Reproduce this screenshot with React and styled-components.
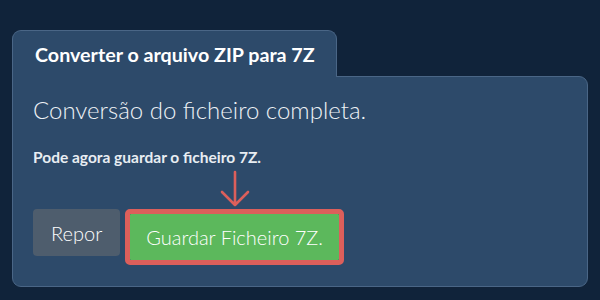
import React from "react";
import styled, { createGlobalStyle } from "styled-components";

const Global = createGlobalStyle`
  html, body { margin: 0; padding: 0; background: #10233a; }
  body { font-family: Lato, "Open Sans", sans-serif; color: #fff; }
  * { box-sizing: border-box; }
`;

const Page = styled.div`
  width: 600px;
  height: 300px;
  padding: 30px 12px 0 12px;
  display: flex;
  flex-direction: column;
  align-items: flex-start;
`;

const Tab = styled.div`
  position: relative;
  z-index: 1;
  height: 47px;
  margin-bottom: -1px;
  padding: 0 21px 0 22px;
  display: flex;
  align-items: center;
  background: #2d4a6a;
  border: 1px solid #4a6686;
  border-bottom: none;
  border-radius: 9px 9px 0 0;
  font-weight: 700;
  font-size: 19.7px;
  color: #fff;
`;

const Panel = styled.div`
  align-self: stretch;
  height: 211px;
  background: #2d4a6a;
  border: 1px solid #4a6686;
  border-radius: 0 9px 9px 9px;
  padding: 19px 20px 0 20px;
`;

const Heading = styled.div`
  font-size: 24px;
  font-weight: 300;
  line-height: 1.2;
  color: #eef2f6;
`;

const Note = styled.div`
  margin-top: 23px;
  font-size: 15.5px;
  font-weight: 700;
  line-height: 1.2;
  color: #e8edf2;
`;

const Actions = styled.div`
  margin-top: 43px;
  display: flex;
  align-items: flex-start;
  gap: 5px;
`;

const Button = styled.button`
  font-family: Lato, "Open Sans", sans-serif;
  font-size: 20px;
  font-weight: 300;
  color: #fff;
  border: none;
  cursor: pointer;
  background: ${(p) => (p.$variant === "save" ? "#5cb85c" : "#4e5d6d")};
  height: ${(p) => (p.$variant === "save" ? "46px" : "47px")};
  padding: 0 ${(p) => (p.$variant === "save" ? "16px" : "18px")};
  border-radius: ${(p) => (p.$variant === "save" ? "1px" : "4px")};
`;

const Highlight = styled.div`
  position: relative;
  border: 5px solid #dc5f5b;
  border-radius: 5px;
  display: flex;
`;

const Arrow = styled.svg`
  position: absolute;
  left: 50%;
  top: -44px;
  transform: translateX(-50%);
`;

export default function App() {
  return (
    <>
      <Global />
      <Page>
        <Tab>Converter o arquivo ZIP para 7Z</Tab>
        <Panel>
          <Heading>Conversão do ficheiro completa.</Heading>
          <Note>Pode agora guardar o ficheiro 7Z.</Note>
          <Actions>
            <Button $variant="reset">Repor</Button>
            <Highlight>
              <Arrow width="30" height="38" viewBox="0 0 30 38">
                <path
                  d="M15 2 V35 M2 22 L15 35 L28 22"
                  fill="none"
                  stroke="#dc5f5b"
                  strokeWidth="2.6"
                  strokeLinecap="round"
                  strokeLinejoin="round"
                />
              </Arrow>
              <Button $variant="save">Guardar Ficheiro 7Z.</Button>
            </Highlight>
          </Actions>
        </Panel>
      </Page>
    </>
  );
}
